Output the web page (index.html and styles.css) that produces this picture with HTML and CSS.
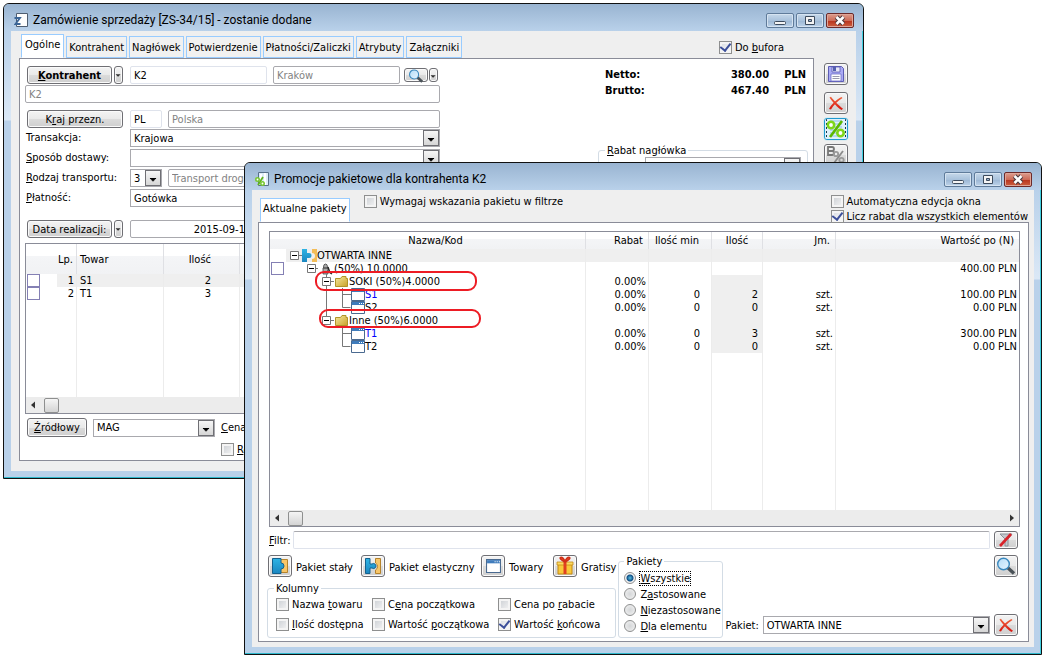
FILE: index.html
```html
<!DOCTYPE html>
<html lang="pl">
<head>
<meta charset="utf-8">
<title>Zamówienie sprzedaży</title>
<link rel="stylesheet" href="styles.css">
</head>
<body>
<svg width="0" height="0" class="defs" aria-hidden="true">
  <defs>
    <linearGradient id="gFolder" x1="0" y1="0" x2="1" y2="1"><stop offset="0" stop-color="#f6e9a0"/><stop offset="1" stop-color="#c9a227"/></linearGradient>
    <linearGradient id="gLens" x1="0" y1="0" x2="1" y2="1"><stop offset="0" stop-color="#b5dcf7"/><stop offset="1" stop-color="#e8f6ff"/></linearGradient>
    <linearGradient id="gRed" x1="0" y1="0" x2="0" y2="1"><stop offset="0" stop-color="#f0623c"/><stop offset="1" stop-color="#d8140f"/></linearGradient>
    <linearGradient id="gBlue" x1="0" y1="0" x2="0" y2="1"><stop offset="0" stop-color="#2fb4e4"/><stop offset="1" stop-color="#1b86c0"/></linearGradient>
  </defs>
  <symbol id="i-arrow" viewBox="0 0 16 16"><path d="M4.500 8h7v1h-1v1h-1v1h-1v1h-1v-1h-1v-1h-1v-1h-1z" fill="#000"/></symbol>
  <symbol id="i-tiny" viewBox="0 0 8 16"><path d="M1 7h5v1h-1v1h-1v1h-1v-1h-1v-1h-1z" fill="#333"/></symbol>
  <symbol id="i-min" viewBox="0 0 26 13"><rect x="7.500" y="7.500" width="11" height="3" rx="1" fill="#f4f4f4" stroke="#3c4a5c"/></symbol>
  <symbol id="i-max" viewBox="0 0 26 13"><path d="M8.500 2.500h9v8h-9z" fill="#f4f4f4" stroke="#3c4a5c"/><path d="M11.500 5.500h3v2h-3z" fill="#9cb4d0" stroke="#3c4a5c"/></symbol>
  <symbol id="i-close" viewBox="0 0 26 13"><path d="M9.500 3l7 7M16.500 3l-7 7" stroke="#4a3a40" stroke-width="4.600"/><path d="M9.500 3l7 7M16.500 3l-7 7" stroke="#fff" stroke-width="2.600"/></symbol>
  <symbol id="i-x" viewBox="0 0 20 20"><path d="M3.500 4.500l1.500-.8c2 3 7 8 12 12l-1.500 1.300c-4-2.500-9-8-12-12.500z" fill="url(#gRed)"/><path d="M15.500 4l1 1c-5 3-9 7-11.500 11.500L3 16c2-4.500 7.500-9.500 12.500-12z" fill="url(#gRed)"/></symbol>
  <symbol id="i-lens" viewBox="0 0 20 18"><path d="M11 10l7 6.500" stroke="#4a5258" stroke-width="3.400"/><circle cx="7.500" cy="7" r="5.800" fill="url(#gLens)" stroke="#3a88bd" stroke-width="1.400"/></symbol>
  <symbol id="i-save" viewBox="0 0 20 20"><path d="M2.500 2.500h13l2 2v13h-15z" fill="#aaaaf4" stroke="#5c5cb4"/><path d="M6 3h8v5H6z" fill="#e8e8f8" stroke="#5c5cb4" stroke-width=".8"/><path d="M7 3h3v4H7z" fill="#5560b0"/><path d="M5 10h10v7H5z" fill="#fff" stroke="#6f6fc8" stroke-width=".8"/><path d="M6.500 12.500h7M6.500 14.500h7" stroke="#9a9ab0"/></symbol>
  <symbol id="i-window" viewBox="0 0 14 13"><path d="M.5.5h13v12H.5z" fill="#fff" stroke="#4a6a90"/><path d="M1 1h12v3H1z" fill="#3f7cbc"/><path d="M8 2.500h1M10 2.500h1M12 2.500h1" stroke="#fff"/></symbol>
  <symbol id="i-folder" viewBox="0 0 13 13"><path d="M.5 3.500h5l1.500-2h4v2h1.500v8H.5z" fill="url(#gFolder)" stroke="#b09428"/></symbol>
  <symbol id="i-plusbox" viewBox="0 0 9 9"><path d="M.5.5h8v8h-8z" fill="#fff" stroke="#777"/><path d="M2 4.500h5" stroke="#000"/></symbol>
</svg>

<section class="window order" aria-label="Zamówienie sprzedaży">
  <header class="titlebar">
    <svg class="app-icon" viewBox="0 0 14 14"><path d="M2.500.5h11v13h-11z" fill="#fdfdfd" stroke="#4e5d70"/><path d="M.5 5h5.500L1.500 11h5" fill="none" stroke="#3b6596" stroke-width="1.800"/></svg>
    <h1>Zamówienie sprzedaży [ZS-34/15] - zostanie dodane</h1>
    <div class="controls">
      <button aria-label="Minimalizuj"><svg><use href="#i-min"/></svg></button>
      <button aria-label="Maksymalizuj"><svg><use href="#i-max"/></svg></button>
      <button class="close" aria-label="Zamknij"><svg><use href="#i-close"/></svg></button>
    </div>
  </header>
  <div class="client">
    <div class="tabs">
      <button class="tab active">Ogólne</button><button class="tab">Kontrahent</button><button class="tab">Nagłówek</button><button class="tab">Potwierdzenie</button><button class="tab">Płatności/Zaliczki</button><button class="tab">Atrybuty</button><button class="tab">Załączniki</button>
      <label class="check buffer"><input type="checkbox" checked><span>Do <u>b</u>ufora</span></label>
    </div>
    <div class="columns">
      <div class="panel order-panel">
        <div class="order-head">
          <div class="form">
            <div class="row"><div class="pair"><button class="btn strong"><span><u>K</u>ontrahent</span></button><button class="btn drop" aria-label="Rozwiń"><svg><use href="#i-tiny"/></svg></button></div><input class="field light" value="K2" aria-label="Kod"><input class="field city" value="Kraków" aria-label="Miasto"><div class="pair find"><button class="btn lens" aria-label="Szukaj"><svg><use href="#i-lens"/></svg></button><button class="btn drop" aria-label="Rozwiń"><svg><use href="#i-tiny"/></svg></button></div></div>
            <div class="row full"><input class="field" value="K2" aria-label="Nazwa"></div>
            <div class="row country"><div class="pair"><button class="btn"><span>K<u>r</u>aj przezn.</span></button></div><input class="field light code" value="PL" aria-label="Kod kraju"><input class="field" value="Polska" aria-label="Kraj"></div>
            <div class="row tight"><label class="name" for="tr">Transakcja:</label><span class="combo"><select id="tr"><option>Krajowa</option></select><svg><use href="#i-arrow"/></svg></span></div>
            <div class="row tight"><label class="name" for="sp"><u>S</u>posób dostawy:</label><span class="combo"><select id="sp"><option></option></select><svg><use href="#i-arrow"/></svg></span></div>
            <div class="row tight"><label class="name" for="ro"><u>R</u>odzaj transportu:</label><span class="combo code"><select id="ro"><option>3</option></select><svg><use href="#i-arrow"/></svg></span><input class="field" value="Transport drogowy" aria-label="Transport"></div>
            <div class="row tight"><label class="name" for="pl"><u>P</u>łatność:</label><span class="combo"><select id="pl"><option>Gotówka</option></select><svg><use href="#i-arrow"/></svg></span></div>
            <div class="row date"><div class="pair"><button class="btn">Data realizacji:</button><button class="btn drop" aria-label="Rozwiń"><svg><use href="#i-tiny"/></svg></button></div><input class="field dark day" value="2015-09-15" aria-label="Data realizacji"></div>
          </div>
          <div class="summary">
            <dl class="totals"><dt>Netto:</dt><dd>380.00</dd><dd>PLN</dd><dt>Brutto:</dt><dd>467.40</dd><dd>PLN</dd></dl>
            <fieldset class="group discount"><legend><u>R</u>abat nagłówka</legend><div class="row"><label for="kw">Kwota:</label><span class="combo"><select id="kw"><option></option></select><svg><use href="#i-arrow"/></svg></span></div></fieldset>
          </div>
        </div>
        <div class="list">
          <table class="grid items">
            <colgroup><col class="w-mark"><col class="w-lp"><col class="w-code"><col class="w-qty"><col></colgroup>
            <thead><tr><th></th><th class="num">Lp.</th><th>Towar</th><th class="num">Ilość</th><th></th></tr></thead>
            <tbody>
              <tr class="current"><td class="mark"><input type="checkbox" aria-label="Wybierz S1"></td><td class="num">1</td><td>S1</td><td class="num">2</td><td></td></tr>
              <tr><td class="mark"><input type="checkbox" aria-label="Wybierz T1"></td><td class="num">2</td><td>T1</td><td class="num">3</td><td></td></tr>
              <tr class="rest"><td></td><td></td><td></td><td></td><td></td></tr>
            </tbody>
          </table>
          <div class="scroll"><svg viewBox="0 0 16 16"><path d="M9 4.500v7L5 8z" fill="#333"/></svg><i class="thumb"></i></div>
        </div>
        <div class="row source"><button class="btn"><span><u>Ź</u>ródłowy</span></button><span class="combo"><select aria-label="Magazyn"><option>MAG</option></select><svg><use href="#i-arrow"/></svg></span><span><u>C</u>ena</span></div>
        <label class="check reserve"><input type="checkbox"><span><u>R</u>ezerwuj</span></label>
      </div>
      <div class="side">
        <button class="btn icon" aria-label="Zapisz"><svg><use href="#i-save"/></svg></button>
        <button class="btn icon first" aria-label="Anuluj"><svg><use href="#i-x"/></svg></button>
        <button class="btn icon promo" aria-label="Promocje pakietowe"><svg viewBox="0 0 22 20"><path d="M0 0h22v20H0z" fill="#dff0fa"/><path d="M5 2h12M5 5h12M5 8h12M5 11h12M5 14h12M5 17h12" stroke="#8cbfe4"/><path d="M1.500 0v20M20.500 0v20" stroke="#163c4c" stroke-dasharray="2 2"/><path d="M17 2L5 18" stroke="#5cb800" stroke-width="2.600"/><circle cx="6" cy="6" r="3.200" fill="#fff" stroke="#7ed61a" stroke-width="2.600"/><circle cx="15.500" cy="14" r="3.200" fill="#fff" stroke="#7ed61a" stroke-width="2.600"/></svg></button>
        <button class="btn icon" aria-label="Bonifikata"><svg viewBox="0 0 20 20"><path d="M2 2h4q2 0 2 2t-2 2q2 0 2 2t-2 2H2zM2 6h4" fill="none" stroke="#777" stroke-width="1.800"/><path d="M17 6L8 18" stroke="#8c8c8c" stroke-width="1.800"/><circle cx="10" cy="9" r="2.200" fill="none" stroke="#999" stroke-width="1.800"/><circle cx="15.500" cy="15" r="2.200" fill="none" stroke="#999" stroke-width="1.800"/></svg></button>
      </div>
    </div>
  </div>
</section>

<section class="window promos" aria-label="Promocje pakietowe">
  <header class="titlebar">
    <svg class="app-icon" viewBox="0 0 14 14"><path d="M3.500.5h10v13h-10z" fill="#dcecf8" stroke="#587089"/><path d="M6 2v10M10 1v12" stroke="#fff" stroke-width="2"/><path d="M8 5L3 13" stroke="#62b41e" stroke-width="1.800"/><circle cx="2.500" cy="7.500" r="1.700" fill="#fff" stroke="#79c834" stroke-width="1.600"/><circle cx="7.500" cy="11.500" r="1.700" fill="#fff" stroke="#79c834" stroke-width="1.600"/></svg>
    <h1>Promocje pakietowe dla kontrahenta K2</h1>
    <div class="controls">
      <button aria-label="Minimalizuj"><svg><use href="#i-min"/></svg></button>
      <button aria-label="Maksymalizuj"><svg><use href="#i-max"/></svg></button>
      <button class="close" aria-label="Zamknij"><svg><use href="#i-close"/></svg></button>
    </div>
  </header>
  <div class="client">
    <div class="options">
      <button class="tab active">Aktualne pakiety</button>
      <label class="check"><input type="checkbox"><span>Wymagaj wskazania pakietu w filtrze</span></label>
      <div class="stack"><label class="check"><input type="checkbox"><span>Automatyczna edycja okna</span></label><label class="check"><input type="checkbox" checked><span>Licz rabat dla wszystkich elementów</span></label></div>
    </div>
    <div class="panel promo-panel">
      <div class="list tree-list">
        <table class="grid tree">
          <colgroup><col class="w-tick"><col><col class="w-pct"><col class="w-min"><col class="w-cnt"><col class="w-unit"><col class="w-value"></colgroup>
          <thead><tr><th></th><th class="mid">Nazwa/Kod</th><th class="num">Rabat</th><th class="num">Ilość min</th><th class="mid">Ilość</th><th class="num">Jm.</th><th class="num">Wartość po (N)</th></tr></thead>
          <tbody>
            <tr class="current"><td></td><td><div class="node"><svg class="d0" viewBox="0 0 31 13"><use href="#i-plusbox" x="4" y="2" width="9" height="9"/><path d="M13 6.500h3" stroke="#777"/><path d="M16 0h5v4h2a2 2 0 1 1 0 5h-2v4h-5z" fill="url(#gBlue)"/><path d="M26 0h5v13h-5v-3a3 3 0 0 0 0-6z" fill="#f4bd58"/></svg>OTWARTA INNE</div></td><td></td><td></td><td></td><td></td><td></td></tr>
            <tr><td class="mark"><input type="checkbox" aria-label="Wybierz pakiet"></td><td><div class="node"><svg class="d1" viewBox="0 0 48 13"><use href="#i-plusbox" x="21" y="2" width="9" height="9"/><path d="M30 6.500h2" stroke="#777"/><path d="M37.500 5q0-3 2-3t2 3v1h-4zM37 6h5v6h-5z" fill="#aaa" stroke="#444" stroke-width=".8"/><path d="M42 5l2 6M41 9l5 3" stroke="#222" stroke-width="1.400"/></svg>(50%) 10.0000</div></td><td></td><td></td><td></td><td></td><td class="num">400.00 PLN</td></tr>
            <tr class="leaf"><td></td><td><div class="node"><svg class="d2" viewBox="0 0 63 13"><path d="M40.500-1v14M45 6.500h3" stroke="#777"/><use href="#i-plusbox" x="36" y="2" width="9" height="9"/><use href="#i-folder" x="49" y="0" width="13" height="13"/></svg>SOKI (50%)4.0000</div></td><td class="num">0.00%</td><td></td><td></td><td></td><td></td></tr>
            <tr class="leaf"><td></td><td><div class="node"><svg class="d3" viewBox="0 0 79 13"><path d="M40.500 0v13M56.500 0v13M57 6.500h8" stroke="#777" fill="none"/><use href="#i-window" x="65" y="0" width="14" height="13"/></svg><span class="new">S1</span></div></td><td class="num">0.00%</td><td class="num">0</td><td class="num">2</td><td class="num">szt.</td><td class="num">100.00 PLN</td></tr>
            <tr class="leaf"><td></td><td><div class="node"><svg class="d3" viewBox="0 0 79 13"><path d="M40.500 0v15M56.500 0v6.500h8" stroke="#777" fill="none"/><use href="#i-window" x="65" y="0" width="14" height="13"/></svg>S2</div></td><td class="num">0.00%</td><td class="num">0</td><td class="num">0</td><td class="num">szt.</td><td class="num">0.00 PLN</td></tr>
            <tr class="leaf"><td></td><td><div class="node"><svg class="d2" viewBox="0 0 63 13"><path d="M45 6.500h3" stroke="#777"/><use href="#i-plusbox" x="36" y="2" width="9" height="9"/><use href="#i-folder" x="49" y="0" width="13" height="13"/></svg>Inne (50%)6.0000</div></td><td></td><td></td><td></td><td></td><td></td></tr>
            <tr class="leaf"><td></td><td><div class="node"><svg class="d3" viewBox="0 0 79 13"><path d="M56.500 0v13M57 6.500h8" stroke="#777" fill="none"/><use href="#i-window" x="65" y="0" width="14" height="13"/></svg><span class="new">T1</span></div></td><td class="num">0.00%</td><td class="num">0</td><td class="num">3</td><td class="num">szt.</td><td class="num">300.00 PLN</td></tr>
            <tr class="leaf"><td></td><td><div class="node"><svg class="d3" viewBox="0 0 79 13"><path d="M56.500 0v6.500h8" stroke="#777" fill="none"/><use href="#i-window" x="65" y="0" width="14" height="13"/></svg>T2</div></td><td class="num">0.00%</td><td class="num">0</td><td class="num">0</td><td class="num">szt.</td><td class="num">0.00 PLN</td></tr>
            <tr class="rest"><td></td><td></td><td></td><td></td><td></td><td></td><td></td></tr>
          </tbody>
        </table>
        <div class="scroll"><svg viewBox="0 0 16 16"><path d="M9 4.500v7L5 8z" fill="#333"/></svg><i class="thumb"></i><svg class="end" viewBox="0 0 16 16"><path d="M7 4.500v7L11 8z" fill="#333"/></svg></div>
        <i class="ring ring-a"></i><i class="ring ring-b"></i>
      </div>
      <div class="row filter"><label for="fi"><u>F</u>iltr:</label><input class="field light" id="fi"><button class="btn icon low" aria-label="Wyczyść filtr"><svg viewBox="0 0 20 16"><path d="M4 2h12l-4 5v7h-3V7z" fill="#c4c9ce" stroke="#8b9298"/><path d="M15 2L4 14" stroke="#d8232a" stroke-width="2.600"/></svg></button></div>
      <div class="bottom">
        <div class="left">
          <div class="legend-row">
            <div class="item"><button class="btn icon" aria-label="Pakiet stały"><svg viewBox="0 0 20 20"><path d="M2.500 3.500h15v13h-15z" fill="#f8c668" stroke="#b5832c"/><path d="M2.500 2.500H11V7a3 3 0 1 1 0 6v4.500H2.500z" fill="url(#gBlue)" stroke="#14618e"/></svg></button><span>Pakiet stały</span></div>
            <div class="item"><button class="btn icon" aria-label="Pakiet elastyczny"><svg viewBox="0 0 20 20"><path d="M2.500 2.500H7V8h2a2.500 2.500 0 1 1 0 4H7v5.500H2.500z" fill="url(#gBlue)" stroke="#14618e"/><path d="M12.500 2.500h5v15h-5V14a4 4 0 0 0 0-7z" fill="#f8c668" stroke="#b5832c"/></svg></button><span>Pakiet elastyczny</span></div>
            <div class="item"><button class="btn icon" aria-label="Towary"><svg viewBox="0 0 20 20"><use href="#i-window" x="3" y="3" width="15" height="14"/></svg></button><span>Towary</span></div>
            <div class="item"><button class="btn icon" aria-label="Gratisy"><svg viewBox="0 0 20 20"><path d="M3 8h14v10H3z" fill="#f8c83a" stroke="#c48a14"/><path d="M2 6h16v3H2z" fill="#fadb64" stroke="#c48a14" stroke-width=".8"/><path d="M8.500 6h3v12h-3z" fill="#e04020"/><path d="M10 6C7 5 4 2 5.500 1.500S9 2 10 6c1-4 3-5 4.500-4.500S13 5 10 6z" fill="#ee5030" stroke="#d03018" stroke-width="1.500"/></svg></button><span>Gratisy</span></div>
          </div>
          <fieldset class="group cols"><legend>Kolumny</legend>
            <label class="check"><input type="checkbox"><span>Nazwa <u>t</u>owaru</span></label><label class="check"><input type="checkbox"><span>C<u>e</u>na początkowa</span></label><label class="check"><input type="checkbox"><span>Cena po <u>r</u>abacie</span></label>
            <label class="check"><input type="checkbox"><span><u>I</u>lość dostępna</span></label><label class="check"><input type="checkbox"><span>Wartość <u>p</u>oczątkowa</span></label><label class="check"><input type="checkbox" checked><span>Wartość <u>k</u>ońcowa</span></label>
          </fieldset>
        </div>
        <fieldset class="group kinds"><legend>Pakiety</legend>
          <label class="radio"><input type="radio" name="kind" checked><span class="focus"><u>W</u>szystkie</span></label>
          <label class="radio"><input type="radio" name="kind"><span>Z<u>a</u>stosowane</span></label>
          <label class="radio"><input type="radio" name="kind"><span><u>N</u>iezastosowane</span></label>
          <label class="radio"><input type="radio" name="kind"><span><u>D</u>la elementu</span></label>
        </fieldset>
        <div class="right">
          <button class="btn icon" aria-label="Szukaj"><svg><use href="#i-lens"/></svg></button>
          <div class="row"><label for="pk">Pakiet:</label><span class="combo"><select id="pk"><option>OTWARTA INNE</option></select><svg><use href="#i-arrow"/></svg></span><button class="btn icon" aria-label="Usuń"><svg><use href="#i-x"/></svg></button></div>
        </div>
      </div>
    </div>
  </div>
</section>
</body>
</html>
```

FILE: styles.css
```css
:root {
  --ui: "DejaVu Sans Condensed", "Noto Sans", sans-serif;
  --face: #efefef;
  --edge: #8a8c98;
  --line: #a9a9ae;
}
* { box-sizing: border-box; }
body {
  margin: 0;
  min-height: 100vh;
  background: #fff;
  color: #000;
  font: 11px/13px var(--ui);
  white-space: nowrap;
  overflow: hidden;
}
button, input, select { font: inherit; color: inherit; margin: 0; }
button { padding: 0; white-space: nowrap; }
.defs { position: absolute; }
svg { display: block; flex: none; }
u { text-decoration: underline; text-underline-offset: 1px; }

/* Windows */
.window {
  position: absolute;
  padding: 0 7px 7px;
  border: 1px solid #111;
  border-radius: 6px 6px 0 0;
  background: linear-gradient(#99b4d1 0, #b9d1ea 28px, #dbe8f6 116px, #b9d1ea 117px);
  box-shadow: inset -1px 0 #41cfe0, inset 0 -1px #2fb8cc;
}
.order { left: 3px; top: 3px; right: 184px; }
.promos { left: 244px; top: 162px; right: 6px; }
.titlebar {
  display: flex;
  align-items: center;
  height: 27px;
  margin: 0 -7px;
  padding: 5px 9px 0 10px;
  border-radius: 5px 5px 0 0;
  background: linear-gradient(#99b4d1, #b9d1ea);
}
.app-icon { width: 14px; height: 14px; }
h1 { flex: 1; margin: 0 0 0 5px; font: 12px/16px Roboto, "Noto Sans", sans-serif; }
.controls { display: flex; gap: 2px; }
.controls button {
  width: 28px;
  height: 15px;
  border: 1px solid #5f7b9a;
  border-radius: 2px;
  background: linear-gradient(#c6d8ea, #a9c2dc 50%, #9bb6d3 51%, #bdd3ea);
  box-shadow: inset 0 0 0 1px #d5e3f1;
}
.controls .close {
  border-color: #6b2a2a;
  background: linear-gradient(#dc9d8e, #cd6b57 50%, #b8321c 51%, #cc6040);
  box-shadow: inset 0 0 0 1px #e0a597;
}
.controls svg { width: 26px; height: 13px; }
.client { background: var(--face); }

/* Tabs */
.tabs { display: flex; align-items: flex-end; gap: 2px; height: 27px; padding: 0 10px; }
.tab {
  height: 22px;
  padding: 0 2px;
  border: 1px solid #99ccff;
  background: #f1f1f1;
}
.tab.active { height: 24px; padding: 0 3px 4px; background: #fff; border-bottom-color: #fff; }
.buffer { margin: 0 62px 4px auto; }
.options { display: flex; align-items: flex-start; height: 32px; padding: 4px 6px 0 8px; }
.options .tab { margin: 4px 14px 0 0; height: 24px; padding: 0 2px 3px; }
.stack { display: grid; gap: 1px; margin-left: auto; }

/* Controls */
.check, .radio { display: flex; align-items: center; gap: 3px; height: 14px; }
.check input {
  appearance: none;
  width: 13px;
  height: 13px;
  border: 1px solid #8e8f8f;
  background: linear-gradient(135deg, #c9cdd2, #f6f6f6);
  box-shadow: inset 0 0 0 2px #f4f4f4;
}
.check input:checked {
  background: linear-gradient(135deg, #d5d9e0, #fff);
  display: grid;
  place-items: center;
}
.check input:checked::before {
  content: "";
  width: 5px;
  height: 8px;
  margin-top: -2px;
  border: solid #3c4f9a;
  border-width: 0 2px 2px 0;
  transform: rotate(38deg);
}
.radio { gap: 4px; height: 16px; }
.radio input {
  appearance: none;
  width: 12px;
  height: 12px;
  border: 1px solid #8e8f8f;
  border-radius: 50%;
  background: radial-gradient(#d4d6d8, #f4f4f4);
}
.radio input:checked {
  background: radial-gradient(circle, #56c0e4 0, #0f4f86 3px, #f2f2f2 4px);
}
.focus { outline: 1px dotted #000; }
.btn {
  display: grid;
  place-items: center;
  height: 18px;
  border: 1px solid #6f6f74;
  border-radius: 3px;
  background: linear-gradient(#f3f3f3, #e9e9e9 50%, #dbdbdb 51%, #cfcfcf);
  box-shadow: inset 0 0 0 1px #fafafa;
}
.strong { font-weight: bold; }
.drop { width: 9px; }
.drop svg { width: 7px; height: 14px; }
.icon { width: 24px; height: 22px; }
.icon svg { width: 20px; height: 20px; }
.icon.low { height: 18px; }
.icon.low svg { height: 16px; }
.field {
  flex: 1;
  min-width: 0;
  width: 100%;
  height: 18px;
  padding: 0 3px;
  border: 1px solid var(--line);
  border-radius: 2px;
  background: #fff;
  color: #828282;
  outline: 0;
}
.field.light { border-color: #a9a9ae #dfe3ec #dfe3ec; color: #000; }
.form .field.light { border-color: #dfe3ec; }
.field.dark { color: #000; }
.combo {
  flex: 1;
  display: flex;
  height: 18px;
  border: 1px solid var(--line);
  background: #fff;
}
.combo select {
  flex: 1;
  min-width: 0;
  height: 16px;
  padding: 0 3px;
  border: 0;
  appearance: none;
  background: none;
}
.combo svg {
  width: 16px;
  height: 16px;
  border: 1px solid #6f6f74;
  background: linear-gradient(#f6f6f6, #d6d6d6);
}
.panel { background: #fff; border: 1px solid var(--edge); }
.row { display: flex; align-items: center; gap: 6px; }
.group { min-width: 0; margin: 0; border: 1px solid #d3dce5; border-radius: 3px; }
.group legend { padding: 0 2px; margin: 0; }

/* Order form */
.columns { display: flex; gap: 10px; padding: 0 8px 10px; }
.order-panel { flex: 1; padding: 7px 5px 4px; }
.order-head { display: flex; justify-content: space-between; }
.form { flex: 0 1 415px; display: grid; gap: 1px; }
.pair { display: flex; gap: 2px; width: 99px; padding: 0 1px 0 2px; }
.pair .btn { flex: 1; }
.pair .drop { flex: none; }
.find { width: 34px; margin: 0 2px 0 -2px; padding: 0; gap: 1px; }
.find .btn { height: 14px; }
.lens svg { width: 18px; height: 14px; }
.city { flex: 0 1 127px; }
.code { flex: 0 0 32px; }
.country { margin-top: 6px; }
.tight { min-height: 19px; align-items: flex-start; }
.name { width: 99px; padding: 2px 0 0 1px; }
.date { margin-top: 11px; }
.day { text-align: center; padding-right: 128px; }
.summary { flex: 0 1 210px; }
.totals { display: grid; grid-template-columns: 1fr auto auto; column-gap: 15px; margin: 1px 2px 0 7px; font-weight: bold; line-height: 16px; }
.totals dd { margin: 0; }
.discount { margin-top: 45px; padding: 0 6px 4px 6px; }
.side { display: flex; flex-direction: column; gap: 4px; padding-top: 5px; }
.side .first { margin-top: 3px; }
.promo { border-color: #1f9ad0; overflow: hidden; box-shadow: 0 0 1px #36c0e8; }
.promo svg { width: 22px; height: 20px; }
.source { margin-top: 4px; padding-left: 2px; }
.source .btn { width: 60px; height: 19px; }
.source .combo { flex: 0 0 122px; }
.reserve { margin: 5px 0 0 196px; }

/* Lists */
.list { position: relative; border: 1px solid var(--edge); }
.order-panel .list { margin-top: 5px; }
.grid { width: 100%; table-layout: fixed; border-collapse: separate; border-spacing: 0; }
.grid th, .grid td { padding: 0 3px; border-right: 1px solid #ececec; text-align: left; font-weight: normal; }
.grid th:last-child, .grid td:last-child { border-right: 0; }
.grid th { background: linear-gradient(#fff 40%, #f4f5f7 41%, #f1f2f4); border-right-color: #dfe0e4; }
.grid td { height: 13px; }
.grid .num { text-align: right; }
.grid .mid { text-align: center; }
.grid .mark { padding: 0 1px; }
.mark input {
  display: block;
  appearance: none;
  width: 13px;
  height: 13px;
  border: 1px solid #8480b4;
  background: #fff;
}
.current td { background: var(--face); }
.current td:first-child { background: #fff; }
.items th { height: 30px; }
.items .rest td { height: 97px; }
.items th:first-child, .items td:first-child { border-right: 0; }
.items .num:nth-child(4) { padding-right: 28px; }
.items td.num:nth-child(2) { padding-right: 2px; }
.items th.num:nth-child(2) { padding: 0 6px 0 0; direction: rtl; unicode-bidi: plaintext; }
.w-mark { width: 31px; }
.w-lp { width: 20px; }
.w-code { width: 87px; }
.w-qty { width: 76px; }
.tree th { height: 17px; padding: 0 5px; }
.tree td { padding: 0 2px; }
.tree td:nth-child(2) { padding: 0; }
.tree th:first-child, .tree td:first-child { border-right: 0; }
.tree th:nth-child(4) { padding-right: 12px; }
.tree td:nth-child(4) { padding-right: 11px; }
.tree td:nth-child(5) { padding-right: 4px; }
.tree .leaf td:nth-child(5) { background: var(--face); }
.tree .rest td { height: 157px; }
.w-tick { width: 16px; }
.w-pct, .w-min { width: 63px; }
.w-cnt { width: 51px; }
.w-unit { width: 73px; }
.w-value { width: 183px; }
.node { display: flex; height: 13px; }
.node svg { height: 13px; overflow: visible; }
.d0 { width: 31px; }
.d1 { width: 48px; }
.d2 { width: 63px; }
.d3 { width: 79px; }
.new { color: #00f; }
.scroll { display: flex; align-items: center; gap: 2px; height: 16px; background: #ececec; }
.scroll svg { width: 16px; height: 16px; }
.scroll .end { margin-left: auto; }
.thumb { width: 15px; height: 15px; border: 1px solid #8e8f8f; border-radius: 2px; background: linear-gradient(#f5f5f5, #d4d4d4); }
.ring { position: absolute; border: 2px solid #ed1c24; border-radius: 9px; width: 162px; }
.ring-a { left: 45px; top: 39px; height: 20px; }
.ring-b { left: 49px; top: 77px; height: 19px; }

/* Package window */
.promo-panel { margin: 0 5px 0 6px; padding: 8px 8px 3px; }
.promos .client { padding-bottom: 5px; }
.tree-list { margin-left: 2px; }
.filter { gap: 4px; margin: 4px 2px 6px; }
.filter .field { margin-left: -2px; }
.bottom { display: flex; align-items: stretch; gap: 2px; }
.left { flex: 0 0 349px; display: flex; flex-direction: column; justify-content: space-between; }
.legend-row { display: grid; grid-template-columns: 93px 120px 72px auto; padding-left: 1px; }
.item { display: flex; align-items: center; gap: 4px; }
.item span { padding-top: 3px; }
.cols { display: grid; grid-template-columns: 96px 126px auto; row-gap: 6px; padding: 2px 8px 6px; }
.cols legend { margin-left: -2px; }
.kinds { flex: 0 0 105px; padding: 2px 0 3px 5px; }
.right { flex: 1; display: flex; flex-direction: column; justify-content: space-between; align-items: flex-end; padding: 0 2px 2px 0; }
.right .row { width: 100%; gap: 4px; }
```
